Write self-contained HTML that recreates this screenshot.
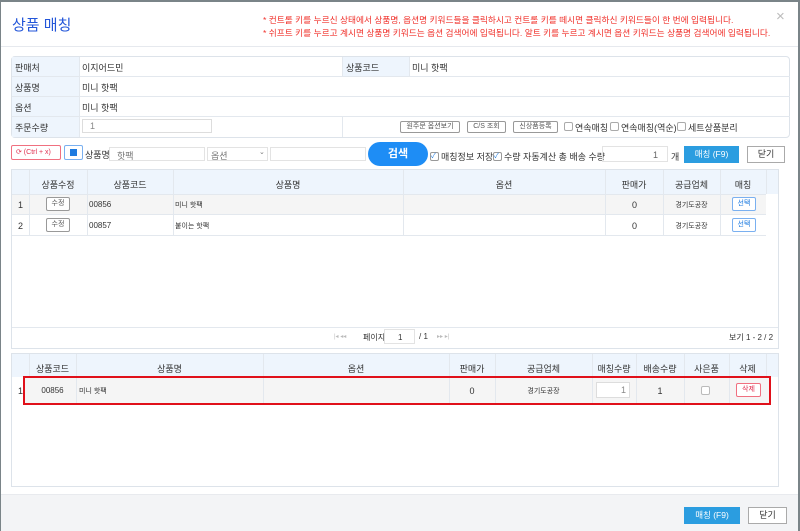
<!DOCTYPE html>
<html><head><meta charset="utf-8"><style>
*{box-sizing:border-box;margin:0;padding:0}
body{width:800px;height:531px;overflow:hidden;background:#7a8488;font-family:"Liberation Sans","Noto Sans CJK KR",sans-serif;font-size:9px;color:#333}
.m{position:absolute;left:1px;top:2px;width:797px;height:529px;background:#fff}
.a{position:absolute}
.t{position:absolute;white-space:nowrap}
.bx{position:absolute;border:1px solid #dde3ea}
.btn{position:absolute;border:1px solid #999;border-radius:2px;background:#fff;font-size:7px;text-align:center;color:#555}
.cb{position:absolute;width:9px;height:9px;border:1px solid #aaa;border-radius:2px;background:#fff}
.hd{background:#eef5fd}
.c{position:absolute;text-align:center;white-space:nowrap}
.vl{position:absolute;width:1px;background:#e3e8ee}
</style></head><body>
<div class="m">
<div class="t" style="left:11px;top:12px;font-size:15px;color:#2356d9">상품 매칭</div>
<div class="t" style="left:262px;top:11px;font-size:8.7px;color:#f0302a">* 컨트롤 키를 누르신 상태에서 상품명, 옵션명 키워드들을 클릭하시고 컨트롤 키를 떼시면 클릭하신 키워드들이 한 번에 입력됩니다.</div>
<div class="t" style="left:262px;top:24px;font-size:8.7px;color:#f0302a">* 쉬프트 키를 누르고 계시면 상품명 키워드는 옵션 검색어에 입력됩니다. 알트 키를 누르고 계시면 옵션 키워드는 상품명 검색어에 입력됩니다.</div>
<div class="t" style="left:775px;top:6px;font-size:15px;color:#bbb">×</div>
<div class="a" style="left:0;top:44px;width:797px;height:1px;background:#e6e9ee"></div>

<div class="bx" style="left:10px;top:54px;width:779px;height:82px;border-radius:4px"></div>
<div class="a hd" style="left:11px;top:55px;width:67px;height:80px"></div>
<div class="a hd" style="left:341px;top:55px;width:67px;height:20px"></div>
<div class="a" style="left:78px;top:55px;width:1px;height:80px;background:#e3e8ee"></div>
<div class="a" style="left:341px;top:55px;width:1px;height:20px;background:#e3e8ee"></div>
<div class="a" style="left:408px;top:55px;width:1px;height:20px;background:#e3e8ee"></div>
<div class="a" style="left:341px;top:115px;width:1px;height:20px;background:#e3e8ee"></div>
<div class="a" style="left:11px;top:74px;width:778px;height:1px;background:#e3e8ee"></div>
<div class="a" style="left:11px;top:94px;width:778px;height:1px;background:#e3e8ee"></div>
<div class="a" style="left:11px;top:114px;width:778px;height:1px;background:#e3e8ee"></div>
<div class="t" style="left:14px;top:59px">판매처</div><div class="t" style="left:81px;top:59px">이지어드민</div>
<div class="t" style="left:345px;top:59px">상품코드</div><div class="t" style="left:411px;top:59px">미니 핫팩</div>
<div class="t" style="left:14px;top:79px">상품명</div><div class="t" style="left:81px;top:79px">미니 핫팩</div>
<div class="t" style="left:14px;top:99px">옵션</div><div class="t" style="left:81px;top:99px">미니 핫팩</div>
<div class="t" style="left:14px;top:119px">주문수량</div>
<div class="a" style="left:81px;top:117px;width:130px;height:14px;border:1px solid #ddd"></div>
<div class="t" style="left:89px;top:119px;color:#888">1</div>
<div class="btn" style="left:399px;top:119px;width:60px;height:12px;line-height:10px">원주문 옵션보기</div>
<div class="btn" style="left:466px;top:119px;width:39px;height:12px;line-height:10px">C/S 조회</div>
<div class="btn" style="left:512px;top:119px;width:45px;height:12px;line-height:10px">신상품등록</div>
<div class="cb" style="left:563px;top:120px"></div><div class="t" style="left:574px;top:119px">연속매칭</div>
<div class="cb" style="left:609px;top:120px"></div><div class="t" style="left:620px;top:119px">연속매칭(역순)</div>
<div class="cb" style="left:676px;top:120px"></div><div class="t" style="left:687px;top:119px">세트상품분리</div>

<div class="a" style="left:10px;top:143px;width:50px;height:15px;border:1px solid #f07080;border-radius:2px;color:#e03050;font-size:7px;line-height:13px;padding-left:4px">⟳ (Ctrl + x)</div>
<div class="a" style="left:63px;top:143px;width:19px;height:15px;border:1px solid #7ab0f0;border-radius:2px"><div class="a" style="left:5px;top:3px;width:7px;height:7px;background:#1e7be0"></div></div>
<div class="t" style="left:84px;top:146px">상품명</div>
<div class="a" style="left:108px;top:145px;width:96px;height:14px;border:1px solid #e3e3e3"></div><div class="t" style="left:116px;top:147px;color:#777">핫팩</div>
<div class="a" style="left:206px;top:145px;width:61px;height:14px;border:1px solid #e3e3e3"></div><div class="t" style="left:210px;top:147px;color:#777">옵션</div><div class="t" style="left:258px;top:146px;color:#777;font-size:7px">⌄</div>
<div class="a" style="left:269px;top:145px;width:96px;height:14px;border:1px solid #e3e3e3"></div>
<div class="a" style="left:367px;top:140px;width:60px;height:24px;background:#1e8df5;border-radius:12px;color:#fff;font-size:11px;text-align:center;line-height:24px;font-weight:bold">검색</div>
<div class="cb" style="left:429px;top:150px;border-color:#999;color:#1e7be0;font-size:7px;line-height:7px">✓</div><div class="t" style="left:440px;top:148px">매칭정보 저장</div>
<div class="cb" style="left:492px;top:150px;border-color:#999;color:#1e7be0;font-size:7px;line-height:7px">✓</div><div class="t" style="left:503px;top:148px">수량 자동계산 총 배송 수량</div>
<div class="a" style="left:601px;top:144px;width:66px;height:16px;border:1px solid #e3e3e3"></div><div class="t" style="left:652px;top:148px;color:#666">1</div>
<div class="t" style="left:670px;top:148px">개</div>
<div class="a" style="left:683px;top:144px;width:55px;height:17px;background:#2b9de0;color:#fff;text-align:center;line-height:17px;font-size:8.5px">매칭 (F9)</div>
<div class="a" style="left:746px;top:144px;width:38px;height:17px;border:1px solid #aaa;text-align:center;line-height:15px;font-size:9px">닫기</div>

<div class="bx" style="left:10px;top:167px;width:768px;height:180px"></div>
<div class="a hd" style="left:11px;top:168px;width:766px;height:24px"></div>
<div class="a" style="left:11px;top:192px;width:754px;height:20px;background:#f5f5f5"></div>
<div class="a" style="left:11px;top:192px;width:754px;height:1px;background:#e3e8ee"></div>
<div class="a" style="left:11px;top:212px;width:754px;height:1px;background:#e3e8ee"></div>
<div class="a" style="left:11px;top:233px;width:754px;height:1px;background:#e3e8ee"></div>
<div class="vl" style="left:28px;top:168px;height:66px"></div><div class="vl" style="left:86px;top:168px;height:66px"></div><div class="vl" style="left:172px;top:168px;height:66px"></div><div class="vl" style="left:402px;top:168px;height:66px"></div><div class="vl" style="left:604px;top:168px;height:66px"></div><div class="vl" style="left:662px;top:168px;height:66px"></div><div class="vl" style="left:719px;top:168px;height:66px"></div><div class="vl" style="left:765px;top:168px;height:24px"></div>
<div class="c" style="left:28px;width:58px;top:176px">상품수정</div><div class="c" style="left:86px;width:86px;top:176px">상품코드</div><div class="c" style="left:172px;width:230px;top:176px">상품명</div><div class="c" style="left:402px;width:202px;top:176px">옵션</div><div class="c" style="left:604px;width:58px;top:176px">판매가</div><div class="c" style="left:662px;width:57px;top:176px">공급업체</div><div class="c" style="left:719px;width:46px;top:176px">매칭</div>
<div class="t" style="left:17px;top:198px">1</div><div class="btn" style="left:45px;top:195px;width:24px;height:14px;line-height:12px">수정</div><div class="t" style="left:88px;top:198px;font-size:8px">00856</div><div class="t" style="left:174px;top:198px;font-size:7px">미니 핫팩</div><div class="t" style="left:631px;top:198px">0</div><div class="c" style="left:662px;width:57px;top:198px;font-size:7px">경기도공장</div><div class="btn" style="left:731px;top:195px;width:24px;height:14px;line-height:12px;border-color:#7ab0f0;color:#1e7be0">선택</div>
<div class="t" style="left:17px;top:219px">2</div><div class="btn" style="left:45px;top:216px;width:24px;height:14px;line-height:12px">수정</div><div class="t" style="left:88px;top:219px;font-size:8px">00857</div><div class="t" style="left:174px;top:219px;font-size:7px">붙이는 핫팩</div><div class="t" style="left:631px;top:219px">0</div><div class="c" style="left:662px;width:57px;top:219px;font-size:7px">경기도공장</div><div class="btn" style="left:731px;top:216px;width:24px;height:14px;line-height:12px;border-color:#7ab0f0;color:#1e7be0">선택</div>
<div class="a" style="left:11px;top:325px;width:766px;height:1px;background:#e3e8ee"></div>
<div class="t" style="left:333px;top:331px;color:#bbb;font-size:6px">|◂ ◂◂</div>
<div class="t" style="left:362px;top:330px;font-size:8px">페이지</div>
<div class="a" style="left:383px;top:327px;width:31px;height:15px;border:1px solid #e3e3e3"></div><div class="t" style="left:397px;top:331px;font-size:8px">1</div>
<div class="t" style="left:418px;top:330px;font-size:8px">/ 1</div>
<div class="t" style="left:436px;top:331px;color:#bbb;font-size:6px">▸▸ ▸|</div>
<div class="t" style="left:728px;top:330px;font-size:8px">보기 1 - 2 / 2</div>

<div class="bx" style="left:10px;top:351px;width:768px;height:134px"></div>
<div class="a hd" style="left:11px;top:352px;width:766px;height:23px"></div>
<div class="a" style="left:24px;top:376px;width:744px;height:25px;background:#f5f5f5"></div>
<div class="vl" style="left:28px;top:352px;height:23px"></div><div class="vl" style="left:75px;top:352px;height:49px"></div><div class="vl" style="left:262px;top:352px;height:49px"></div><div class="vl" style="left:448px;top:352px;height:49px"></div><div class="vl" style="left:494px;top:352px;height:49px"></div><div class="vl" style="left:591px;top:352px;height:49px"></div><div class="vl" style="left:635px;top:352px;height:49px"></div><div class="vl" style="left:683px;top:352px;height:49px"></div><div class="vl" style="left:728px;top:352px;height:49px"></div><div class="vl" style="left:765px;top:352px;height:23px"></div>
<div class="c" style="left:28px;width:47px;top:360px">상품코드</div><div class="c" style="left:75px;width:187px;top:360px">상품명</div><div class="c" style="left:262px;width:186px;top:360px">옵션</div><div class="c" style="left:448px;width:46px;top:360px">판매가</div><div class="c" style="left:494px;width:97px;top:360px">공급업체</div><div class="c" style="left:591px;width:44px;top:360px">매칭수량</div><div class="c" style="left:635px;width:48px;top:360px">배송수량</div><div class="c" style="left:683px;width:45px;top:360px">사은품</div><div class="c" style="left:728px;width:37px;top:360px">삭제</div>
<div class="a" style="left:22px;top:374px;width:748px;height:29px;border:2px solid #e0101a"></div>
<div class="t" style="left:17px;top:384px">1</div>
<div class="c" style="left:28px;width:47px;top:384px;font-size:8px">00856</div><div class="t" style="left:78px;top:384px;font-size:7px">미니 핫팩</div><div class="c" style="left:448px;width:46px;top:384px">0</div><div class="c" style="left:494px;width:97px;top:384px;font-size:7px">경기도공장</div>
<div class="a" style="left:595px;top:380px;width:34px;height:16px;border:1px solid #ddd;background:#fff"></div><div class="t" style="left:620px;top:383px;color:#888">1</div>
<div class="c" style="left:635px;width:48px;top:384px">1</div>
<div class="cb" style="left:700px;top:384px;border-color:#bbb"></div>
<div class="btn" style="left:735px;top:381px;width:25px;height:14px;line-height:12px;border-color:#f07080;color:#e03050">삭제</div>

<div class="a" style="left:0;top:492px;width:797px;height:37px;background:#f3f4f6;border-top:1px solid #e8eaee"></div>
<div class="a" style="left:683px;top:505px;width:56px;height:17px;background:#2b9de0;color:#fff;text-align:center;line-height:17px;font-size:8.5px">매칭 (F9)</div>
<div class="a" style="left:747px;top:505px;width:39px;height:17px;border:1px solid #aaa;background:#fff;text-align:center;line-height:15px;font-size:9px">닫기</div>
</div>
</body></html>
